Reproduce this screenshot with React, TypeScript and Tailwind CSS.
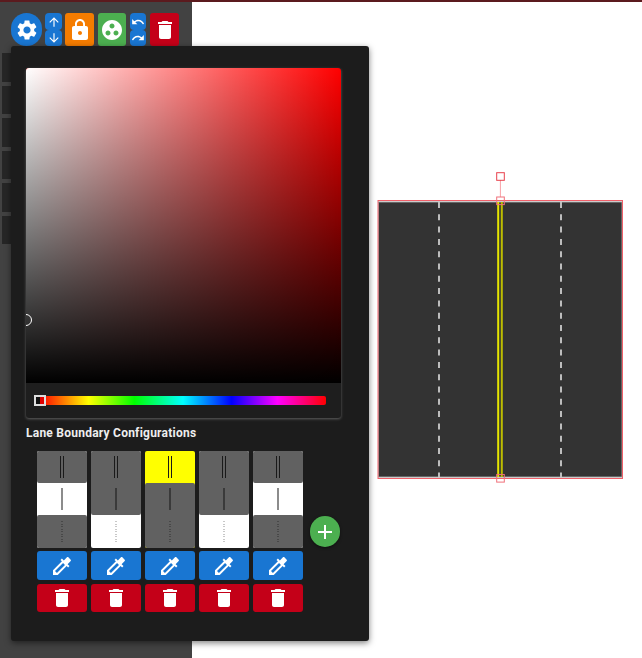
import React from 'react';

const paths = {
  settings: 'M19.14 12.94c.04-.3.06-.61.06-.94 0-.32-.02-.64-.07-.94l2.03-1.58c.18-.14.23-.41.12-.61l-1.92-3.32c-.12-.22-.37-.29-.59-.22l-2.39.96c-.5-.38-1.03-.7-1.62-.94l-.36-2.54c-.04-.24-.24-.41-.48-.41h-3.84c-.24 0-.43.17-.47.41l-.36 2.54c-.59.24-1.13.57-1.62.94l-2.39-.96c-.22-.08-.47 0-.59.22L2.74 8.87c-.12.21-.08.47.12.61l2.03 1.58c-.05.3-.09.63-.09.94s.02.64.07.94l-2.03 1.58c-.18.14-.23.41-.12.61l1.92 3.32c.12.22.37.29.59.22l2.39-.96c.5.38 1.03.7 1.62.94l.36 2.54c.05.24.24.41.48.41h3.84c.24 0 .44-.17.47-.41l.36-2.54c.59-.24 1.13-.56 1.62-.94l2.39.96c.22.08.47 0 .59-.22l1.92-3.32c.12-.22.07-.47-.12-.61l-2.01-1.58zM12 15.6c-1.98 0-3.6-1.62-3.6-3.6s1.62-3.6 3.6-3.6 3.6 1.62 3.6 3.6-1.62 3.6-3.6 3.6z',
  lock: 'M18 8h-1V6c0-2.76-2.24-5-5-5S7 3.24 7 6v2H6c-1.1 0-2 .9-2 2v10c0 1.1.9 2 2 2h12c1.1 0 2-.9 2-2V10c0-1.1-.9-2-2-2zm-6 9c-1.1 0-2-.9-2-2s.9-2 2-2 2 .9 2 2-.9 2-2 2zm3.1-9H8.9V6c0-1.71 1.39-3.1 3.1-3.1 1.71 0 3.1 1.39 3.1 3.1v2z',
  group: 'M12 2C6.48 2 2 6.48 2 12s4.48 10 10 10 10-4.48 10-10S17.52 2 12 2zM8 17.5c-1.38 0-2.5-1.12-2.5-2.5s1.12-2.5 2.5-2.5 2.5 1.12 2.5 2.5-1.12 2.5-2.5 2.5zM9.5 8c0-1.38 1.12-2.5 2.5-2.5s2.5 1.12 2.5 2.5-1.12 2.5-2.5 2.5S9.5 9.38 9.5 8zm6.5 9.5c-1.38 0-2.5-1.12-2.5-2.5s1.12-2.5 2.5-2.5 2.5 1.12 2.5 2.5-1.12 2.5-2.5 2.5z',
  trash: 'M6 19c0 1.1.9 2 2 2h8c1.1 0 2-.9 2-2V7H6v12zM19 4h-3.5l-1-1h-5l-1 1H5v2h14V4z',
  picker: 'M20.71 5.63l-2.34-2.34c-.39-.39-1.02-.39-1.41 0l-3.12 3.12-1.93-1.91-1.41 1.41 1.42 1.42L3 16.25V21h4.75l8.92-8.92 1.42 1.42 1.41-1.41-1.92-1.92 3.12-3.12c.4-.4.4-1.03.01-1.42zM6.92 19L5 17.08l8.06-8.06 1.92 1.92L6.92 19z',
  add: 'M19 13h-6v6h-2v-6H5v-2h6V5h2v6h6v2z',
  up: 'M4 12l1.41 1.41L11 7.83V20h2V7.83l5.58 5.59L20 12l-8-8-8 8z',
  down: 'M20 12l-1.41-1.41L13 16.17V4h-2v12.17l-5.58-5.59L4 12l8 8 8-8z',
  undo: 'M12.5 8c-2.65 0-5.05.99-6.9 2.6L2 7v9h9l-3.62-3.62c1.39-1.16 3.16-1.88 5.12-1.88 3.54 0 6.55 2.31 7.6 5.5l2.37-.78C21.08 11.03 17.15 8 12.5 8z',
  redo: 'M18.4 10.6C16.55 8.99 14.15 8 11.5 8c-4.65 0-8.58 3.03-9.96 7.22L3.9 16c1.05-3.19 4.05-5.5 7.6-5.5 1.95 0 3.73.72 5.12 1.88L13 16h9V7l-3.6 3.6z',
};

const Icon = ({ d, className }: { d: string; className: string }) => (
  <svg viewBox="0 0 24 24" fill="currentColor" className={className}>
    <path d={d} />
  </svg>
);

type Lit = 'top' | 'middle' | 'bottom';

const boundaries: { lit: Lit; color: string }[] = [
  { lit: 'middle', color: 'bg-white' },
  { lit: 'bottom', color: 'bg-white' },
  { lit: 'top', color: 'bg-[#ffff00]' },
  { lit: 'bottom', color: 'bg-white' },
  { lit: 'middle', color: 'bg-white' },
];

// the grey sections round off only where they touch the lit one
const LaneCell = ({ lit, color }: { lit: Lit; color: string }) => (
  <div className={`w-[50px] flex flex-col rounded-[2px] overflow-hidden ${color}`}>
    <div className={`h-8 flex items-center justify-center gap-[2px] ${lit === 'top' ? '' : 'bg-[#616161]'} ${lit === 'middle' ? 'rounded-b-[2px]' : ''}`}>
      <div className="w-px h-[22px] bg-[#1a1a1a]" />
      <div className="w-px h-[22px] bg-[#1a1a1a]" />
    </div>
    <div className={`h-8 flex items-center justify-center ${lit === 'middle' ? '' : 'bg-[#616161]'} ${lit === 'top' ? 'rounded-t-[2px]' : ''} ${lit === 'bottom' ? 'rounded-b-[2px]' : ''}`}>
      <div className={`w-[2px] h-[22px] ${lit === 'middle' ? 'bg-[#8c8c8c]' : 'bg-[#3a3a3a]'}`} />
    </div>
    <div className={`h-[33px] flex items-center justify-center ${lit === 'bottom' ? '' : 'bg-[#616161]'} ${lit === 'middle' ? 'rounded-t-[2px]' : ''}`}>
      <div className="h-[21px] flex flex-col justify-between">
        {[0, 1, 2, 3, 4, 5, 6, 7, 8].map((i) => (
          <div key={i} className={`w-[2px] h-px ${lit === 'bottom' ? 'bg-[#c8c8c8]' : 'bg-[#484848]'}`} />
        ))}
      </div>
    </div>
  </div>
);

const RoadCanvas = () => (
  <svg viewBox="0 0 642 658" className="absolute inset-0 w-[642px] h-[658px]">
    <rect x="378.5" y="202" width="243.5" height="275" fill="#333" stroke="#999" strokeWidth="1" />
    <line x1="439" y1="202" x2="439" y2="477" stroke="#bdbdbd" strokeWidth="2" strokeDasharray="6 6.3" />
    <line x1="561" y1="202" x2="561" y2="477" stroke="#bdbdbd" strokeWidth="2" strokeDasharray="6 6.3" />
    <line x1="498.2" y1="202" x2="498.2" y2="477" stroke="#e6e600" strokeWidth="2" />
    <line x1="501.8" y1="202" x2="501.8" y2="477" stroke="#bdbd00" strokeWidth="2" />
    <rect x="378" y="200.5" width="244.5" height="278" fill="none" stroke="#f0606a" strokeWidth="1" />
    <line x1="500.4" y1="180" x2="500.4" y2="197" stroke="#f9a0a6" strokeWidth="1" />
    <rect x="496.7" y="172.7" width="7.6" height="7.6" fill="none" stroke="#e8404c" strokeWidth="1" />
    <rect x="496.7" y="197" width="7.6" height="7.6" fill="none" stroke="#f0707a" strokeWidth="1" />
    <rect x="496.7" y="474.5" width="7.6" height="7.6" fill="none" stroke="#f0707a" strokeWidth="1" />
  </svg>
);

export default function App() {
  return (
    <div className="relative w-[642px] h-[658px] overflow-hidden bg-white font-['Roboto',sans-serif]">
      <RoadCanvas />

      {/* Side rail */}
      <div className="absolute left-0 top-0 w-48 h-full bg-[#424242]">
        <div className="mt-[53px] ml-[2px] w-[9px] flex flex-col gap-1">
          {[29, 28, 29, 28, 29, 28].map((h, i) => (
            <div key={i} style={{ height: h }} className="bg-[#262626]" />
          ))}
        </div>
      </div>
      <div className="absolute left-0 top-0 w-full h-[2px] bg-[#5b1a1e]" />

      {/* Toolbar */}
      <div className="absolute left-[11px] top-[13px] flex items-start h-[33px]">
        <button className="w-[31px] h-[33px] rounded-full bg-[#1976d2] text-white flex items-center justify-center mr-[3px]">
          <Icon d={paths.settings} className="w-6 h-6" />
        </button>
        <div className="flex flex-col mr-[3px]">
          <button className="w-[17px] h-[17px] rounded-[4px] bg-[#1976d2] text-white flex items-center justify-center">
            <Icon d={paths.up} className="w-[14px] h-[14px]" />
          </button>
          <button className="w-[17px] h-4 rounded-[4px] bg-[#1976d2] text-white flex items-center justify-center">
            <Icon d={paths.down} className="w-[14px] h-[14px]" />
          </button>
        </div>
        <button className="w-[29px] h-[33px] rounded-[3px] bg-[#f57c00] text-white flex items-center justify-center mr-1">
          <Icon d={paths.lock} className="w-6 h-6" />
        </button>
        <button className="w-[28px] h-[33px] rounded-[3px] bg-[#4caf50] text-white flex items-center justify-center mr-1">
          <Icon d={paths.group} className="w-6 h-6" />
        </button>
        <div className="flex flex-col mr-1">
          <button className="w-4 h-[17px] rounded-[4px] bg-[#1976d2] text-white flex items-center justify-center">
            <Icon d={paths.undo} className="w-[14px] h-[14px]" />
          </button>
          <button className="w-4 h-4 rounded-[4px] bg-[#1976d2] text-white flex items-center justify-center">
            <Icon d={paths.redo} className="w-[14px] h-[14px]" />
          </button>
        </div>
        <button className="w-[29px] h-[33px] rounded-[3px] bg-[#c40018] text-white flex items-center justify-center">
          <Icon d={paths.trash} className="w-6 h-6" />
        </button>
      </div>

      {/* Colour panel */}
      <div className="absolute left-[11px] top-[46px] w-[358px] h-[595px] bg-[#1c1c1c] rounded-[3px] shadow-[0_2px_6px_rgba(0,0,0,0.5)] pt-[22px] px-[15px]">
        <div className="w-[315px] rounded-[3px] overflow-hidden bg-[#1e1e1e] shadow-[0_1px_3px_rgba(255,255,255,0.3)]">
          <div className="relative h-[315px] bg-[#ff0000]">
            <div className="absolute inset-0 bg-gradient-to-r from-white to-transparent" />
            <div className="absolute inset-0 bg-gradient-to-b from-transparent to-black" />
            <div className="absolute left-[-6px] top-[246px] w-3 h-3 rounded-full border border-white" />
          </div>
          <div className="h-[35px] flex items-center pl-[14px] pr-[15px]">
            <div className="relative w-full h-[9px] rounded-[2px] bg-[linear-gradient(to_right,#f00_0%,#ff0_17%,#0f0_33%,#0ff_50%,#00f_67%,#f0f_83%,#f00_100%)]">
              <div className="absolute left-[-6px] top-[-1px] w-3 h-[11px] border-2 border-[#ddd] bg-[linear-gradient(to_right,#111_50%,#e00000_50%)]" />
            </div>
          </div>
        </div>

        <h3 className="mt-2 text-xs font-bold leading-[14px] text-[#eee] tracking-[0.02em]">Lane Boundary Configurations</h3>

        <div className="mt-[11px] pl-[11px] flex">
          <div className="flex gap-1">
            {boundaries.map((b, i) => (
              <div key={i} className="flex flex-col">
                <LaneCell lit={b.lit} color={b.color} />
                <button className="mt-[3px] w-[50px] h-[29px] rounded-[3px] bg-[#1976d2] text-white flex items-center justify-center">
                  <Icon d={paths.picker} className="w-6 h-6" />
                </button>
                <button className="mt-1 w-[50px] h-7 rounded-[3px] bg-[#c40018] text-white flex items-center justify-center">
                  <Icon d={paths.trash} className="w-6 h-6" />
                </button>
              </div>
            ))}
          </div>
          <button className="ml-[7px] mt-[65px] w-[30px] h-[31px] rounded-full bg-[#4caf50] text-white flex items-center justify-center shadow-[0_1px_3px_rgba(0,0,0,0.5)]">
            <Icon d={paths.add} className="w-6 h-6" />
          </button>
        </div>
      </div>
    </div>
  );
}
